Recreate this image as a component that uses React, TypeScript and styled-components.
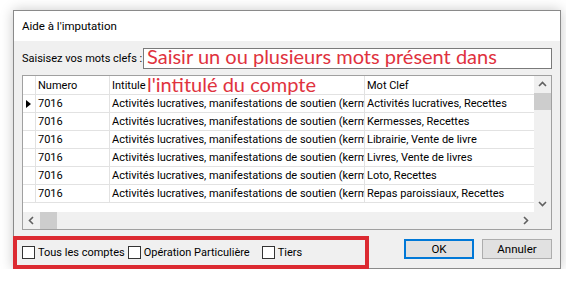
import React from 'react';
import styled, { createGlobalStyle } from 'styled-components';

const GlobalStyle = createGlobalStyle`
  body {
    margin: 0;
    background: #ffffff;
    font-family: Roboto, "Liberation Sans", sans-serif;
    font-size: 11px;
    color: #000;
  }
`;

const Page = styled.div`
  padding: 10px 0 0 13px;
`;

const Window = styled.div`
  width: 548px;
  box-sizing: border-box;
  border: 1px solid #8a8a8a;
  background: #f0f0f0;
  box-shadow: 0 0 12px rgba(0, 0, 0, 0.22);
`;

const TitleBar = styled.div`
  height: 30px;
  display: flex;
  align-items: center;
  padding-left: 8px;
  background: #fff;
  font-size: 11.5px;
`;

const Body = styled.div`
  display: flex;
  flex-direction: column;
  padding: 7px 8px 0;
`;

const SearchRow = styled.div`
  display: flex;
  align-items: center;
  height: 21px;
`;

const SearchLabel = styled.span`
  width: 121px;
  flex: none;
  white-space: nowrap;
`;

const KeywordField = styled.div`
  position: relative;
  flex: 1;
  height: 21px;
  box-sizing: border-box;
  border: 1px solid #7a7a7a;
  background: #fff;
  z-index: 2;
`;

const Annotation = styled.div`
  position: absolute;
  left: 3px;
  right: 0;
  top: -7px;
  font-family: Lato, "Noto Sans", sans-serif;
  font-size: 20px;
  line-height: 28px;
  color: #e0323e;
`;

const GridFrame = styled.div`
  margin-top: 6px;
  height: 155px;
  box-sizing: border-box;
  border: 1px solid #a0a0a0;
  background: #fff;
  display: grid;
  grid-template-columns: 1fr 17px;
  grid-template-rows: 1fr 17px;
`;

const Table = styled.div`
  overflow: hidden;
`;

const Row = styled.div<{ $header?: boolean }>`
  display: grid;
  grid-template-columns: 13px 74px 255px 1fr;
  height: ${p => (p.$header ? 19 : 18)}px;
  box-sizing: border-box;
  border-bottom: 1px solid #e2e2e2;
`;

const Cell = styled.div`
  display: flex;
  align-items: center;
  padding-left: 2px;
  overflow: hidden;
  white-space: nowrap;
  box-sizing: border-box;
  border-right: 1px solid #e2e2e2;

  &:last-child {
    border-right: none;
  }
`;

const RowHeader = styled(Cell)`
  padding-left: 3px;
`;

const Pointer = styled.span`
  width: 0;
  height: 0;
  border-left: 5px solid #000;
  border-top: 4px solid transparent;
  border-bottom: 4px solid transparent;
`;

const ScrollTrack = styled.div<{ $vertical?: boolean }>`
  display: flex;
  flex-direction: ${p => (p.$vertical ? 'column' : 'row')};
  background: #f0f0f0;
`;

const ArrowButton = styled.div<{ $end?: boolean; $vertical?: boolean }>`
  width: 17px;
  height: 17px;
  flex: none;
  display: flex;
  align-items: center;
  justify-content: center;
  ${p => (p.$end ? (p.$vertical ? 'margin-top: auto;' : 'margin-left: auto;') : '')}
`;

const Thumb = styled.div`
  width: 17px;
  height: 17px;
  flex: none;
  background: #cdcdcd;
`;

const Corner = styled.div`
  background: #f0f0f0;
`;

const Footer = styled.div`
  display: flex;
  align-items: flex-start;
  margin: 6px 0 -1px -9px;
`;

const CheckGroup = styled.div`
  width: 356px;
  height: 33px;
  box-sizing: border-box;
  border: 4px solid #dc2a31;
  display: flex;
  align-items: center;
  padding-left: 5px;
`;

const CheckItem = styled.label<{ $gap?: number }>`
  display: flex;
  align-items: center;
  white-space: nowrap;
  margin-right: ${p => p.$gap ?? 0}px;
`;

const CheckBox = styled.span`
  width: 13px;
  height: 13px;
  flex: none;
  box-sizing: border-box;
  border: 1px solid #333;
  background: #fff;
  margin-right: 3px;
`;

const ButtonBar = styled.div`
  display: flex;
  gap: 8px;
  margin: 3px 0 0 auto;
`;

const DialogButton = styled.button<{ $default?: boolean }>`
  width: 70px;
  height: 20px;
  padding: 0;
  box-sizing: border-box;
  font-family: inherit;
  font-size: 11.5px;
  color: #000;
  background: #e1e1e1;
  border: ${p => (p.$default ? '2px solid #0078d7' : '1px solid #adadad')};
`;

type Dir = 'up' | 'down' | 'left' | 'right';

const Chevron = ({ dir }: { dir: Dir }) => {
  const rot = { up: 0, right: 90, down: 180, left: 270 }[dir];
  return (
    <svg width="9" height="9" viewBox="0 0 9 9">
      <polyline
        points="1,6 4.5,2.5 8,6"
        fill="none"
        stroke="#606060"
        strokeWidth="1.6"
        transform={`rotate(${rot} 4.5 4.5)`}
      />
    </svg>
  );
};

const rows = [
  'Activités lucratives, Recettes',
  'Kermesses, Recettes',
  'Librairie, Vente de livre',
  'Livres, Vente de livres',
  'Loto, Recettes',
  'Repas paroissiaux, Recettes',
];

export default function App() {
  return (
    <Page>
      <GlobalStyle />
      <Window>
        <TitleBar>Aide à l'imputation</TitleBar>
        <Body>
          <SearchRow>
            <SearchLabel>Saisisez vos mots clefs :</SearchLabel>
            <KeywordField>
              <Annotation>Saisir un ou plusieurs mots présent dans l'intitulé du compte</Annotation>
            </KeywordField>
          </SearchRow>
          <GridFrame>
            <Table>
              <Row $header>
                <RowHeader />
                <Cell>Numero</Cell>
                <Cell>Intitule</Cell>
                <Cell>Mot Clef</Cell>
              </Row>
              {rows.map((motClef, i) => (
                <Row key={motClef}>
                  <RowHeader>{i === 0 && <Pointer />}</RowHeader>
                  <Cell>7016</Cell>
                  <Cell>Activités lucratives, manifestations de soutien (kermesses, ventes)</Cell>
                  <Cell>{motClef}</Cell>
                </Row>
              ))}
            </Table>
            <ScrollTrack $vertical>
              <ArrowButton><Chevron dir="up" /></ArrowButton>
              <Thumb />
              <ArrowButton $end $vertical><Chevron dir="down" /></ArrowButton>
            </ScrollTrack>
            <ScrollTrack>
              <ArrowButton><Chevron dir="left" /></ArrowButton>
              <Thumb />
              <ArrowButton $end><Chevron dir="right" /></ArrowButton>
            </ScrollTrack>
            <Corner />
          </GridFrame>
          <Footer>
            <CheckGroup>
              <CheckItem $gap={3}><CheckBox />Tous les comptes</CheckItem>
              <CheckItem $gap={12}><CheckBox />Opération Particulière</CheckItem>
              <CheckItem><CheckBox />Tiers</CheckItem>
            </CheckGroup>
            <ButtonBar>
              <DialogButton $default>OK</DialogButton>
              <DialogButton>Annuler</DialogButton>
            </ButtonBar>
          </Footer>
        </Body>
      </Window>
    </Page>
  );
}
